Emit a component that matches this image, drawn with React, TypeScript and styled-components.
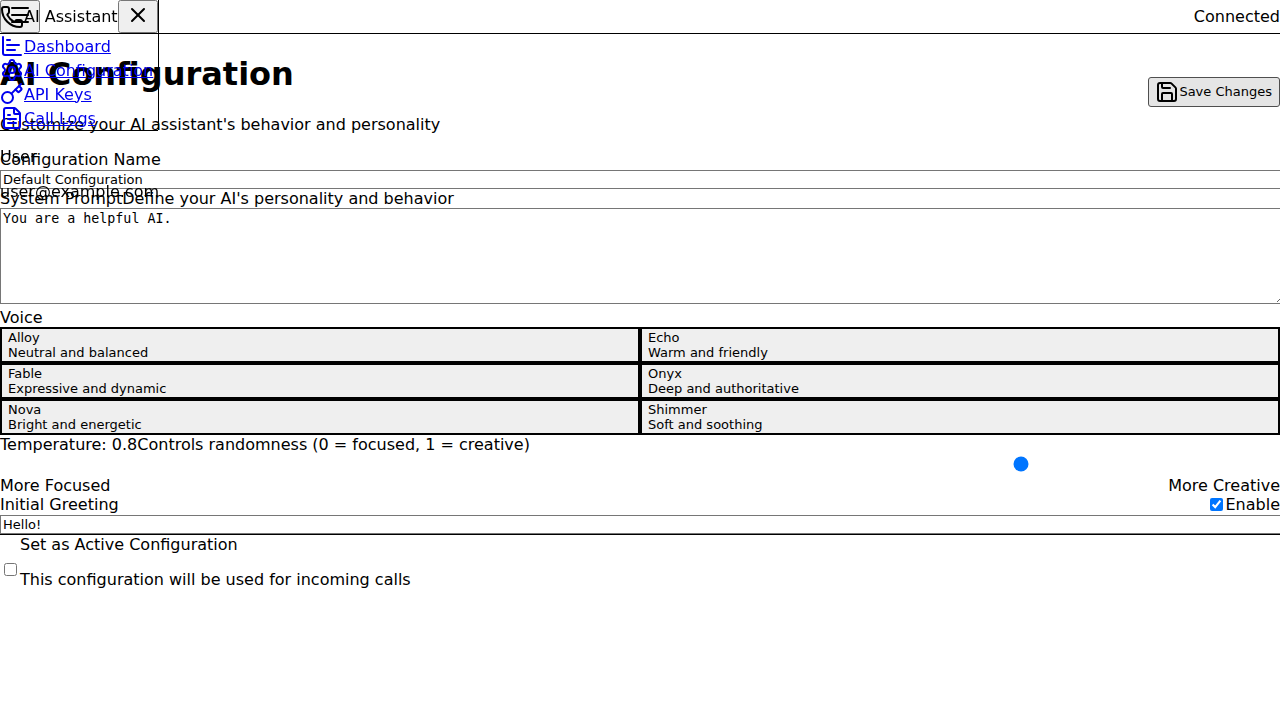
import React, { useState } from "react";
import styled, { createGlobalStyle } from "styled-components";
import { Menu, Phone, X, ChartBar, Settings, Key, FileText, Save } from "lucide-react";

const GlobalStyle = createGlobalStyle`
  body {
    margin: 0;
    overflow-x: hidden;
    background: #fff;
    color: #000;
    font-family: "DejaVu Sans", sans-serif;
    font-size: 16px;
  }
  button, input {
    font-family: "DejaVu Sans", sans-serif;
    font-size: 13px;
  }
`;

const Sidebar = styled.aside`
  position: fixed;
  top: 0;
  left: 0;
  z-index: 10;
  box-sizing: border-box;
  width: 159px;
  height: 130px;
  border-right: 1px solid #000;
`;

const SidebarHeader = styled.div`
  display: flex;
  align-items: center;
  justify-content: space-between;
  border-bottom: 1px solid #000;
`;

const Brand = styled.div`
  display: flex;
  align-items: center;
  white-space: nowrap;
`;

const IconButton = styled.button`
  color: #000;
`;

const Nav = styled.nav`
  display: flex;
  flex-direction: column;
`;

const NavLink = styled.a`
  display: flex;
  align-items: center;
  white-space: nowrap;
  color: #0000ee;
  text-decoration: underline;
`;

const UserInfo = styled.div`
  border-top: 1px solid #000;
`;

const TopBar = styled.header`
  display: flex;
  align-items: center;
  justify-content: space-between;
  border-bottom: 1px solid #000;
`;

const PageHeader = styled.div`
  display: flex;
  align-items: center;
  justify-content: space-between;
`;

const SaveButton = styled.button`
  display: flex;
  align-items: center;
  padding: 2px 7px 2px 6px;
  border: 1px solid #4f4f4f;
  border-radius: 3px;
  background: #e5e5e5;
  color: #000;
`;

const TextInput = styled.input`
  width: 100%;
  border: 1px solid #767676;
`;

const PromptArea = styled.textarea`
  width: 100%;
  border: 1px solid #767676;
  font-family: "DejaVu Sans Mono", monospace;
`;

const VoiceGrid = styled.div`
  display: grid;
  grid-template-columns: repeat(2, 1fr);
`;

const VoiceButton = styled.button`
  border: 2px solid #000;
  text-align: left;
  color: #000;
`;

const Slider = styled.input`
  width: 100%;
  appearance: none;
`;

const SplitRow = styled.div`
  display: flex;
  align-items: center;
  justify-content: space-between;
`;

const CheckLabel = styled.label`
  display: flex;
  align-items: center;
`;

const ActiveRow = styled.div`
  display: flex;
  align-items: center;
  border-top: 1px solid #000;
`;

const links = [
  { label: "Dashboard", Icon: ChartBar },
  { label: "AI Configuration", Icon: Settings },
  { label: "API Keys", Icon: Key },
  { label: "Call Logs", Icon: FileText },
];

const voices = [
  ["Alloy", "Neutral and balanced"],
  ["Echo", "Warm and friendly"],
  ["Fable", "Expressive and dynamic"],
  ["Onyx", "Deep and authoritative"],
  ["Nova", "Bright and energetic"],
  ["Shimmer", "Soft and soothing"],
];

export default function App() {
  const [temperature, setTemperature] = useState(0.8);
  return (
    <>
      <GlobalStyle />
      <Sidebar>
        <SidebarHeader>
          <Brand>
            <Phone />
            <span>AI Assistant</span>
          </Brand>
          <IconButton type="button" aria-label="Close menu"><X /></IconButton>
        </SidebarHeader>
        <Nav>
          {links.map(({ label, Icon }) => (
            <NavLink href="#" key={label}>
              <Icon />
              <span>{label}</span>
            </NavLink>
          ))}
        </Nav>
        <UserInfo>
          <p>User</p>
          <p>user@example.com</p>
        </UserInfo>
      </Sidebar>
      <TopBar>
        <IconButton type="button" aria-label="Open menu"><Menu /></IconButton>
        <span>Connected</span>
      </TopBar>
      <main>
        <PageHeader>
          <div>
            <h1>AI Configuration</h1>
            <p>Customize your AI assistant's behavior and personality</p>
          </div>
          <SaveButton type="button"><Save />Save Changes</SaveButton>
        </PageHeader>
        <div>
          <label htmlFor="config-name">Configuration Name</label>
          <TextInput id="config-name" type="text" defaultValue="Default Configuration" />
        </div>
        <div>
          <label htmlFor="prompt">System Prompt<span>Define your AI's personality and behavior</span></label>
          <PromptArea id="prompt" rows={6} defaultValue="You are a helpful AI." />
        </div>
        <div>
          <span id="voice-label">Voice</span>
          <VoiceGrid role="group" aria-labelledby="voice-label">
            {voices.map(([name, description]) => (
              <VoiceButton type="button" key={name}>
                <div>{name}</div>
                <div>{description}</div>
              </VoiceButton>
            ))}
          </VoiceGrid>
        </div>
        <div>
          <label htmlFor="temperature">
            Temperature: {temperature}
            <span>Controls randomness (0 = focused, 1 = creative)</span>
          </label>
          <Slider
            id="temperature"
            type="range"
            min="0"
            max="1"
            step="0.1"
            value={temperature}
            onChange={(e) => setTemperature(Number(e.target.value))}
          />
          <SplitRow>
            <span>More Focused</span>
            <span>More Creative</span>
          </SplitRow>
        </div>
        <div>
          <SplitRow>
            <label htmlFor="greeting">Initial Greeting</label>
            <CheckLabel>
              <input type="checkbox" defaultChecked />
              <span>Enable</span>
            </CheckLabel>
          </SplitRow>
          <TextInput id="greeting" type="text" defaultValue="Hello!" />
        </div>
        <ActiveRow>
          <input id="active" type="checkbox" />
          <div>
            <label htmlFor="active">Set as Active Configuration</label>
            <p>This configuration will be used for incoming calls</p>
          </div>
        </ActiveRow>
      </main>
    </>
  );
}
